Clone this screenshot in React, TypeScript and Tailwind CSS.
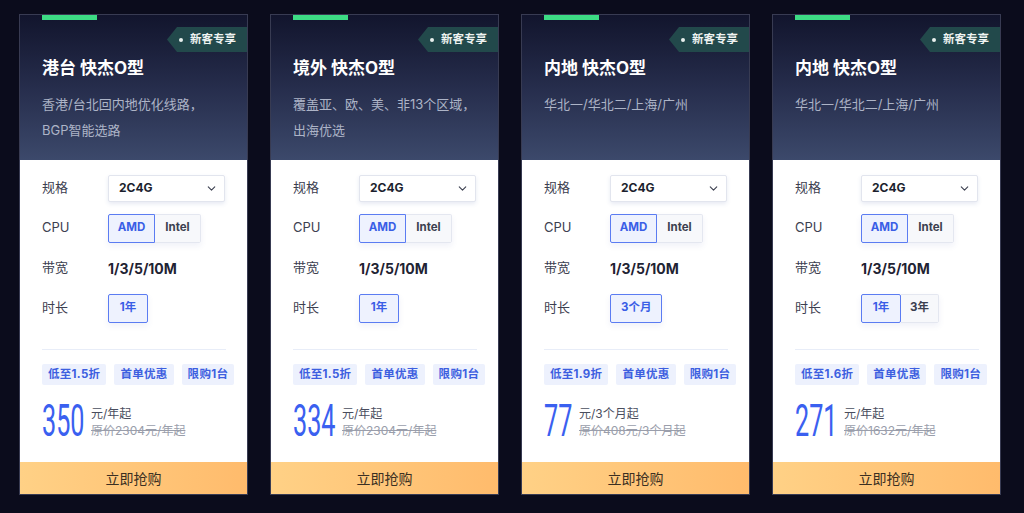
import React from "react";
import { ChevronDown } from "lucide-react";

type Card = {
  title: string;
  desc: string[];
  durations: string[];
  discount: string;
  price: string;
  unit: string;
  orig: string;
};

const cards: Card[] = [
  {
    title: "港台 快杰O型",
    desc: ["香港/台北回内地优化线路，", "BGP智能选路"],
    durations: ["1年"],
    discount: "低至1.5折",
    price: "350",
    unit: "元/年起",
    orig: "原价2304元/年起",
  },
  {
    title: "境外 快杰O型",
    desc: ["覆盖亚、欧、美、非13个区域，", "出海优选"],
    durations: ["1年"],
    discount: "低至1.5折",
    price: "334",
    unit: "元/年起",
    orig: "原价2304元/年起",
  },
  {
    title: "内地 快杰O型",
    desc: ["华北一/华北二/上海/广州"],
    durations: ["3个月"],
    discount: "低至1.9折",
    price: "77",
    unit: "元/3个月起",
    orig: "原价408元/3个月起",
  },
  {
    title: "内地 快杰O型",
    desc: ["华北一/华北二/上海/广州"],
    durations: ["1年", "3年"],
    discount: "低至1.6折",
    price: "271",
    unit: "元/年起",
    orig: "原价1632元/年起",
  },
];

const font = { fontFamily: '"Inter", "Noto Sans CJK SC", sans-serif' };

function Row({ label, children }: { label: string; children: React.ReactNode }) {
  return (
    <div className="flex h-[40px] items-center">
      <div className="w-[66px] text-[13px] text-[#3c4050]">{label}</div>
      <div className="flex items-center">{children}</div>
    </div>
  );
}

function PriceCard({ c }: { c: Card }) {
  return (
    <div className="relative flex h-[481px] w-[229px] flex-col overflow-hidden border border-[#383b52] bg-white">
      <div className="relative h-[145px] bg-gradient-to-b from-[#12152d] via-[#262d4c] to-[#3c496b] pl-[22px] pt-[41px]">
        <div className="absolute left-[22px] top-0 h-[5px] w-[55px] bg-[#3ddc84]" />
        <div
          className="absolute right-0 top-[12px] flex h-[25px] w-[80px] items-center bg-[#22494b] pl-[12px]"
          style={{ clipPath: "polygon(10px 0, 100% 0, 100% 100%, 10px 100%, 0 50%)" }}
        >
          <span className="mr-[7px] h-[4px] w-[4px] rounded-full bg-[#e8f0ee]" />
          <span className="text-[11.5px] font-bold text-[#eef3f1]">新客专享</span>
        </div>
        <div className="text-[17px] font-bold leading-[24px] text-white">{c.title}</div>
        <div className="mt-[11px] text-[13px] leading-[26px] text-[#adb4c7]">
          {c.desc.map((d, i) => (
            <div key={i}>{d}</div>
          ))}
        </div>
      </div>
      <div className="flex-1 pl-[22px] pr-[21px] pt-[8px]">
        <Row label="规格">
          <div className="flex h-[27px] w-[117px] items-center justify-between rounded-[2px] border border-[#e2e5ee] bg-white pl-[10px] pr-[6px] shadow-[0_2px_4px_rgba(60,80,160,0.12)]">
            <span className="text-[12px] font-bold text-[#1c1f2e]">2C4G</span>
            <ChevronDown size={13} strokeWidth={2} className="text-[#3c4050]" />
          </div>
        </Row>
        <Row label="CPU">
          <div className="flex h-[29px] shadow-[0_3px_6px_rgba(60,80,160,0.08)]">
            <div className="flex w-[47px] items-center justify-center rounded-l-[2px] border border-[#5b7cf2] bg-[#eef2fe] text-[11.5px] font-bold text-[#3a5ee6]">
              AMD
            </div>
            <div className="flex w-[46px] items-center justify-center rounded-r-[2px] border border-l-0 border-[#e4e7f0] bg-[#f7f8fb] text-[11.5px] font-bold text-[#3c4050]">
              Intel
            </div>
          </div>
        </Row>
        <Row label="带宽">
          <span className="text-[14px] font-bold text-[#1f2333]">1/3/5/10M</span>
        </Row>
        <Row label="时长">
          <div className="flex h-[29px] shadow-[0_3px_6px_rgba(60,80,160,0.08)]">
            {c.durations.map((d, i) => (
              <div
                key={d}
                className={
                  i === 0
                    ? "flex min-w-[40px] items-center justify-center rounded-[2px] border border-[#5b7cf2] bg-[#eef2fe] px-[10px] text-[11.5px] font-bold text-[#3a5ee6]"
                    : "flex min-w-[38px] items-center justify-center rounded-r-[2px] border border-l-0 border-[#e4e7f0] bg-[#f7f8fb] px-[8px] text-[11.5px] font-bold text-[#3c4050]"
                }
              >
                {d}
              </div>
            ))}
          </div>
        </Row>
        <div className="mt-[21px] h-px bg-[#e8edf8]" />
        <div className="mt-[14px] flex gap-[8px] whitespace-nowrap">
          {[c.discount, "首单优惠", "限购1台"].map((t) => (
            <span
              key={t}
              className="flex h-[21px] items-center rounded-[2px] bg-[#edf1fd] px-[6px] text-[11.5px] font-bold tracking-[0.3px] text-[#3d5fe0]"
            >
              {t}
            </span>
          ))}
        </div>
        <div className="mt-[20px] flex h-[34px] items-center">
          <div className="relative h-[34px]" style={{ width: c.price.length * 14 }}>
            <span
              className="absolute left-0 top-[-7px] origin-left scale-x-[0.56] text-[45px] font-normal leading-[45px] text-[#3a60f0]"
              style={{ fontFamily: '"Roboto", sans-serif' }}
            >
              {c.price}
            </span>
          </div>
          <div className="ml-[7px] flex flex-col whitespace-nowrap text-[12px] leading-[17px]">
            <span className="text-[#4a4e5e]">{c.unit}</span>
            <span className="text-[#9a9eab] line-through">{c.orig}</span>
          </div>
        </div>
      </div>
      <div className="flex h-[32px] items-center justify-center bg-gradient-to-r from-[#ffd186] to-[#ffbb6c] text-[14px] text-[#3b2f22]">
        立即抢购
      </div>
    </div>
  );
}

export default function App() {
  return (
    <div className="flex h-[513px] w-full gap-[22px] bg-[#0b0c1c] pl-[19px] pt-[14px]" style={font}>
      {cards.map((c, i) => (
        <PriceCard key={i} c={c} />
      ))}
    </div>
  );
}
